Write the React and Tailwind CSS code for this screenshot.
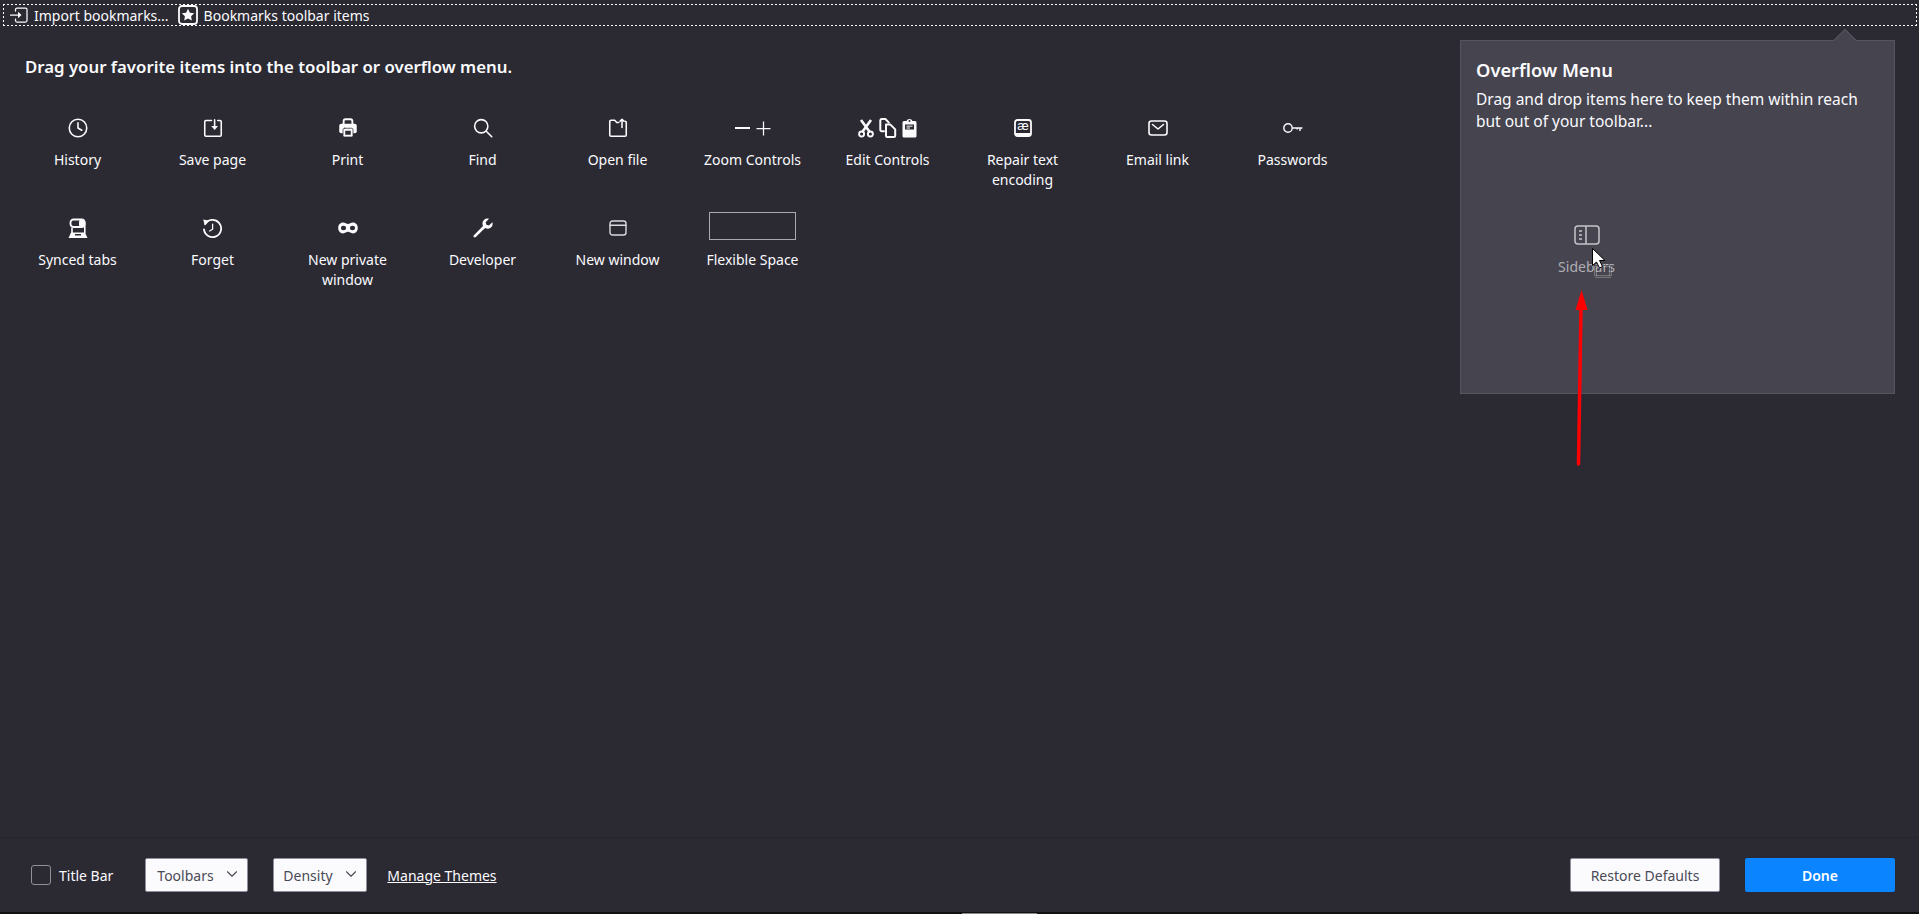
import React from "react";
import { ChevronDown } from "lucide-react";

const Svg = ({ w = 20, h = 20, vw = 16, vh = 16, children, className = "" }) => (
  <svg
    width={w}
    height={h}
    viewBox={`0 0 ${vw} ${vh}`}
    fill="none"
    stroke="#fbfbfe"
    strokeWidth="1.25"
    strokeLinecap="round"
    strokeLinejoin="round"
    className={className}
  >
    {children}
  </svg>
);

const DARK = "#2b2a33";

const HistoryIcon = () => (
  <Svg>
    <circle cx="8" cy="8" r="7" />
    <path d="M8 3.8V8l3 1.8" />
  </Svg>
);

const SaveIcon = () => (
  <Svg>
    <path d="M6.8 2H2.4a1 1 0 0 0-1 1v10.6a1 1 0 0 0 1 1h11.2a1 1 0 0 0 1-1V3a1 1 0 0 0-1-1h-1.8" />
    <path d="M9.3 1.5v6" />
    <path d="M6.6 6.4h5.4L9.3 9.6z" fill="#fbfbfe" stroke="none" />
  </Svg>
);

const PrintIcon = () => (
  <Svg>
    <path d="M4.5 5V2.6A1.6 1.6 0 0 1 6 1h4a1.6 1.6 0 0 1 1.5 1.6V5" strokeWidth="1.5" />
    <rect x="1" y="4.6" width="14" height="7.6" rx="1.6" fill="#fbfbfe" stroke="none" />
    <rect x="4" y="8.2" width="8" height="7" rx="1.2" fill="#fbfbfe" stroke={DARK} strokeWidth="0.6" />
    <rect x="5.8" y="10.2" width="4.4" height="3.2" fill={DARK} stroke="none" />
  </Svg>
);

const FindIcon = () => (
  <Svg>
    <circle cx="6.6" cy="6.6" r="5.3" />
    <path d="M10.6 10.6L15 15" />
  </Svg>
);

const OpenIcon = () => (
  <Svg>
    <path d="M8.6 3.6H7L5.4 1.8H2.4a1 1 0 0 0-1 1v10.8a1 1 0 0 0 1 1h11.2a1 1 0 0 0 1-1V3.6a1 1 0 0 0-1-1" />
    <path d="M11.2 7.6V1M9.6 2.6L11.2 1l1.6 1.6" />
  </Svg>
);

const ZoomIcon = () => (
  <div className="flex items-center gap-[6px]">
    <span className="block w-[15px] h-[1.5px] bg-[#fbfbfe]" />
    <Svg w={15} h={15} vw={15} vh={15}>
      <path d="M7.5 0.5v14M0.5 7.5h14" strokeLinecap="butt" />
    </Svg>
  </div>
);

const EditIcon = () => (
  <div className="flex items-center gap-[5px]">
    <Svg w={16} h={19} vw={16} vh={19}>
      <path d="M3 1l8.4 11.6M13 1L4.6 12.6" strokeWidth="2.6" strokeLinecap="butt" />
      <circle cx="3.6" cy="15" r="2.5" strokeWidth="1.9" />
      <circle cx="12.4" cy="15" r="2.5" strokeWidth="1.9" />
    </Svg>
    <Svg w={18} h={20} vw={18} vh={20}>
      <g strokeWidth="2">
        <path d="M5 13.200H2.800a1.500 1.500 0 0 1-1.500-1.500V2.400A1.500 1.500 0 0 1 2.800 1h3.600l3.400 3.600" />
        <path d="M7 6.400h4.200l5 5v6.400a1.200 1.200 0 0 1-1.200 1.200H8.200A1.200 1.200 0 0 1 7 17.800z" />
      </g>
    </Svg>
    <Svg w={15} h={20} vw={15} vh={20}>
      <path
        d="M2 3h2.600a3 2.600 0 0 1 5.800 0H13a1.500 1.500 0 0 1 1.500 1.500v13.800A1.500 1.500 0 0 1 13 19.600H2A1.500 1.500 0 0 1 .5 18.300V4.500A1.500 1.500 0 0 1 2 3z"
        fill="#fbfbfe"
        stroke="none"
      />
      <circle cx="7.500" cy="3" r="1" fill={DARK} stroke="none" />
      <path d="M3 6.500h9v5H3z" fill={DARK} stroke="none" />
      <path d="M4.500 8.200h6M4.500 10h3.500" stroke="#fbfbfe" strokeWidth="1" strokeLinecap="butt" />
    </Svg>
  </div>
);

const RepairIcon = () => (
  <svg width="18" height="18" viewBox="0 0 18 18">
    <rect x="1" y="1" width="16" height="16" rx="2.500" fill={DARK} stroke="#fbfbfe" strokeWidth="1.800" />
    <path d="M1.500 14h15v2.500h-15z" fill="#fbfbfe" />
    <text x="9" y="11" textAnchor="middle" fontSize="13" fill="#fbfbfe" fontFamily="Liberation Sans, sans-serif">
      æ
    </text>
  </svg>
);

const EmailIcon = () => (
  <Svg w={20} h={16} vw={20} vh={16}>
    <g strokeWidth="1.600">
      <rect x="1" y="1" width="18" height="14" rx="2.500" />
      <path d="M4.500 4.500L10 9l5.500-4.500" />
    </g>
  </Svg>
);

const KeyIcon = () => (
  <Svg w={20} h={12} vw={20} vh={12}>
    <g strokeWidth="1.400">
      <circle cx="5" cy="6" r="4.200" />
      <path d="M9.400 6h10M17 6v3M14.200 6v1.600" strokeLinecap="butt" />
    </g>
  </Svg>
);

const SyncedIcon = () => (
  <Svg w={20} h={20} vw={20} vh={20}>
    <rect x="2.500" y="1.500" width="14" height="7.500" rx="3" strokeWidth="1.800" />
    <rect x="11" y="2" width="5" height="6.500" rx="1.500" fill="#fbfbfe" stroke="none" />
    <path d="M4 9.500V15" strokeWidth="1.600" strokeLinecap="butt" />
    <path d="M16.800 3.500V15" strokeWidth="1.600" strokeLinecap="butt" />
    <path d="M3 14.500h14L19.500 20H.5z" fill="#fbfbfe" stroke="none" />
    <rect x="7" y="16" width="6" height="1.500" fill={DARK} stroke="none" />
  </Svg>
);

const ForgetIcon = () => (
  <Svg w={21} h={21} vw={21} vh={21}>
    <g strokeWidth="1.800">
      <path d="M3.200 6a8.600 8.600 0 1 1-1.200 5.400" />
      <path d="M10.600 6.200v5l-3 1.800" strokeWidth="1.300" />
    </g>
    <path d="M1.200 1.600l6.200 1.200-4.600 4.600z" fill="#fbfbfe" stroke="none" />
  </Svg>
);

const PrivateIcon = () => (
  <Svg w={20} h={12} vw={20} vh={12}>
    <path
      d="M5 .6c2 0 3.600 1.400 5 1.400S13 .6 15 .6c2.800 0 4.800 2.400 4.800 5.400s-2 5.400-4.800 5.400c-2 0-3.600-1.600-5-1.600s-3 1.600-5 1.600C2.200 11.400.2 9 .2 6S2.200.6 5 .6z"
      fill="#fbfbfe"
      stroke="none"
    />
    <ellipse cx="5.500" cy="6" rx="2.600" ry="2.200" fill={DARK} stroke="none" />
    <ellipse cx="14.500" cy="6" rx="2.600" ry="2.200" fill={DARK} stroke="none" />
  </Svg>
);

const WrenchIcon = () => (
  <Svg>
    <path d="M1.500 14.500L8 8" strokeWidth="2.200" />
    <path
      d="M15.500 3.300l-2.800 2.700-2-.6-.6-2L12.800.6C10.600-.2 7.800 1.400 7.600 4c-.1.900.1 1.700.4 2.400L7 8l1.200 1.200L9.800 8c.8.400 1.600.6 2.500.5 2.700-.3 4-3 3.200-5.200z"
      fill="#fbfbfe"
      stroke="none"
    />
  </Svg>
);

const WindowIcon = () => (
  <Svg w={18} h={16} vw={18} vh={16}>
    <g stroke="#d9d9de" strokeWidth="1.400">
      <rect x="1" y="1" width="16" height="14" rx="2.500" />
      <path d="M1 5.200h16" />
    </g>
  </Svg>
);

const SidebarIcon = () => (
  <svg width="26" height="20" viewBox="0 0 26 20" fill="none" stroke="#c4c4ca" strokeWidth="1.500">
    <rect x="1" y="1" width="24" height="18" rx="3" />
    <path d="M12 1v18" />
    <path d="M5 6h3M5 10h3M5 14h3" />
  </svg>
);

const ImportIcon = () => (
  <Svg w={18} h={16} vw={18} vh={16}>
    <path d="M7 1h8.500A1.500 1.500 0 0 1 17 2.500v11a1.500 1.500 0 0 1-1.500 1.500H7a1.500 1.500 0 0 1-1.500-1.500V12M5.500 4V2.500A1.500 1.500 0 0 1 7 1" />
    <path d="M.5 8h7.500" />
    <path d="M8 4.800L11.500 8 8 11.200z" fill="#fbfbfe" stroke="none" />
  </Svg>
);

const StarBoxIcon = () => (
  <Svg w={20} h={20} vw={20} vh={20}>
    <rect x="1" y="1" width="18" height="18" rx="3" strokeWidth="1.800" />
    <path
      d="M10 3.800l1.900 3.900 4.300.6-3.100 3 .7 4.300-3.800-2-3.800 2 .7-4.300-3.100-3 4.300-.6z"
      fill="#fbfbfe"
      stroke="none"
    />
  </Svg>
);

const items = [
  { label: "History", icon: <HistoryIcon /> },
  { label: "Save page", icon: <SaveIcon /> },
  { label: "Print", icon: <PrintIcon /> },
  { label: "Find", icon: <FindIcon /> },
  { label: "Open file", icon: <OpenIcon /> },
  { label: "Zoom Controls", icon: <ZoomIcon /> },
  { label: "Edit Controls", icon: <EditIcon /> },
  { label: "Repair text encoding", icon: <RepairIcon /> },
  { label: "Email link", icon: <EmailIcon /> },
  { label: "Passwords", icon: <KeyIcon /> },
  { label: "Synced tabs", icon: <SyncedIcon /> },
  { label: "Forget", icon: <ForgetIcon /> },
  { label: "New private window", icon: <PrivateIcon /> },
  { label: "Developer", icon: <WrenchIcon /> },
  { label: "New window", icon: <WindowIcon /> },
];

function PaletteItem({ label, icon }) {
  return (
    <div className="flex flex-col items-center h-[100px] pt-[10px]">
      <div className="h-5 flex items-center justify-center">{icon}</div>
      <div className="mt-[12px] max-w-[110px] text-center leading-[20px]">{label}</div>
    </div>
  );
}

function Dropdown({ label, width, pad }) {
  return (
    <button
      style={{ width, paddingLeft: pad }}
      className="h-[34px] flex items-center justify-between pr-[6px] bg-[#fbfbfe] border border-[#8f8f9d] rounded-[2px] text-[#4a4a55]"
    >
      {label}
      <ChevronDown size={18} strokeWidth={1.5} className="text-[#4a4a55] -mt-[3px]" />
    </button>
  );
}

export default function App() {
  return (
    <div className="relative w-[1919px] h-[914px] overflow-hidden flex flex-col bg-[#2b2a33] text-[#fbfbfe] text-[14px] font-['Noto_Sans','Open_Sans',sans-serif]">
      {/* bookmarks toolbar target, 2px dash drawn with gradients */}
      <div className="mt-[4px] ml-[3px] mr-[2px] h-[22px] shrink-0 flex items-center pl-[7px] bg-no-repeat [background-image:repeating-linear-gradient(90deg,#fff_0_2px,transparent_2px_4px),repeating-linear-gradient(90deg,#fff_0_2px,transparent_2px_4px),repeating-linear-gradient(0deg,#fff_0_2px,transparent_2px_4px),repeating-linear-gradient(0deg,#fff_0_2px,transparent_2px_4px)] [background-size:100%_1px,100%_1px,1px_100%,1px_100%] [background-position:0_0,0_100%,0_0,100%_0]">
        <ImportIcon />
        <span className="ml-[6px]">Import bookmarks...</span>
        <span className="ml-[9px]">
          <StarBoxIcon />
        </span>
        <span className="ml-[6px]">Bookmarks toolbar items</span>
      </div>

      <div className="flex-1 flex min-h-0">
        <div className="flex-1">
          <h1 className="ml-[25px] mt-[29px] text-[16.8px] leading-[24px] font-semibold">
            Drag your favorite items into the toolbar or overflow menu.
          </h1>
          <div className="ml-[10px] mt-[29px] grid grid-cols-[repeat(10,135px)]">
            {items.map((it) => (
              <PaletteItem key={it.label} {...it} />
            ))}
            <div className="flex flex-col items-center h-[100px] pt-[4px]">
              <div className="w-[87px] h-[28px] border border-[#a9a9af]" />
              <div className="mt-[10px] leading-[20px]">Flexible Space</div>
            </div>
          </div>
        </div>

        {/* overflow panel */}
        <div className="relative w-[435px] h-[354px] mt-[14px] mr-[24px] shrink-0 bg-[#45444f] border border-[#55545f] px-[15px] pt-[16px]">
          <div className="absolute -top-[9px] right-[41px] w-[16px] h-[16px] rotate-45 bg-[#45444f] border-l border-t border-[#55545f]" />
          <div className="relative text-[18.3px] leading-[26px] font-semibold">Overflow Menu</div>
          <p className="relative mt-[5px] text-[15.5px] leading-[22px] w-[395px]">
            Drag and drop items here to keep them within reach but out of your toolbar...
          </p>
          <div className="mt-[93px] ml-[43px] w-[135px] flex flex-col items-center text-[#aeaeb4]">
            <SidebarIcon />
            <div className="mt-[12px] leading-[20px]">Sidebars</div>
          </div>
        </div>
      </div>

      {/* footer */}
      <div className="h-[75px] shrink-0 flex items-center border-t border-[#26252d] pl-[31px] pr-[24px]">
        <div className="w-5 h-5 border border-[#8f8f9d] rounded-[3px]" />
        <span className="ml-[8px]">Title Bar</span>
        <div className="ml-[32px]">
          <Dropdown label="Toolbars" width={103} pad={11} />
        </div>
        <div className="ml-[25px]">
          <Dropdown label="Density" width={94} pad={9} />
        </div>
        <a className="ml-[20px] underline">Manage Themes</a>
        <button className="ml-auto w-[150px] h-[34px] bg-[#fbfbfe] border border-[#8f8f9d] rounded-[2px] text-[#4a4a55]">
          Restore Defaults
        </button>
        <button className="ml-[25px] w-[150px] h-[34px] bg-[#0a84ff] rounded-[2px] font-semibold text-white">
          Done
        </button>
      </div>
      <div className="h-[2px] shrink-0 bg-[#111114]">
        <div className="ml-[962px] w-[75px] h-px mt-px bg-[#8a8a8a]" />
      </div>

      {/* drag cursor and annotation arrow */}
      <svg className="absolute left-[1592px] top-[248px]" width="22" height="32" viewBox="0 0 22 32">
        <rect x="3.500" y="17.500" width="15" height="11" fill="none" stroke="#fff" strokeWidth="2" strokeDasharray="1 1" />
        <rect x="3.500" y="17.500" width="15" height="11" fill="none" stroke="#000" strokeDasharray="1 1" strokeDashoffset="1" />
        <path d="M.5.5v17l4-3.500 3 6 3-1.500-3-6h5.500z" fill="#fff" stroke="#000" />
      </svg>
      <svg className="absolute left-[1570px] top-[288px]" width="24" height="180" viewBox="0 0 24 180">
        <path d="M8.500 176L11 20" stroke="#f00" strokeWidth="3.500" strokeLinecap="round" />
        <path d="M11.500 2L17.500 22H5.500z" fill="#f00" />
      </svg>
    </div>
  );
}
